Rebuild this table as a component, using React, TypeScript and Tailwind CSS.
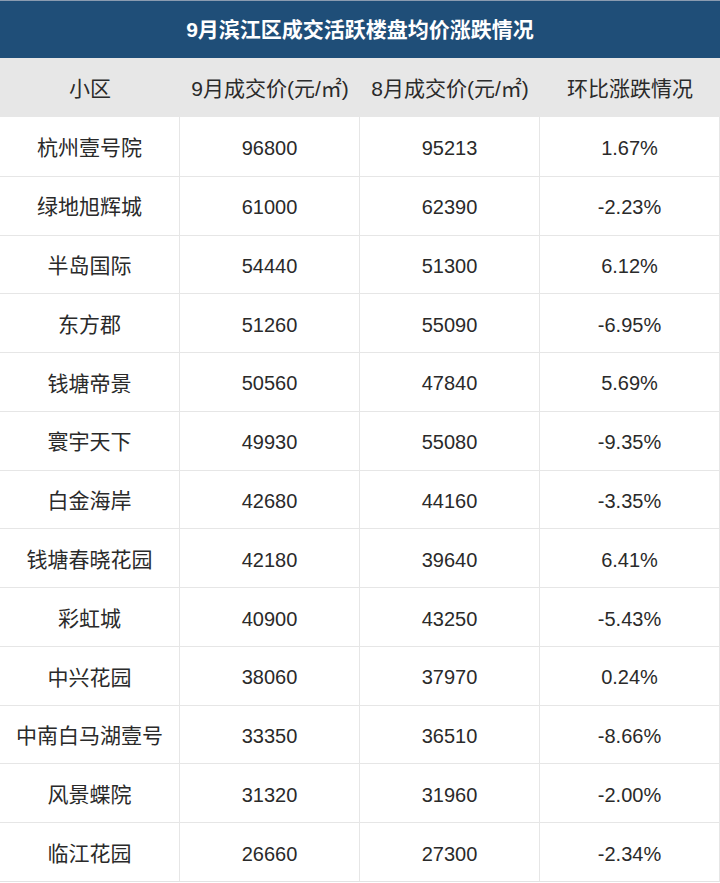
const rows: [string, string, string, string][] = [
  ["杭州壹号院", "96800", "95213", "1.67%"],
  ["绿地旭辉城", "61000", "62390", "-2.23%"],
  ["半岛国际", "54440", "51300", "6.12%"],
  ["东方郡", "51260", "55090", "-6.95%"],
  ["钱塘帝景", "50560", "47840", "5.69%"],
  ["寰宇天下", "49930", "55080", "-9.35%"],
  ["白金海岸", "42680", "44160", "-3.35%"],
  ["钱塘春晓花园", "42180", "39640", "6.41%"],
  ["彩虹城", "40900", "43250", "-5.43%"],
  ["中兴花园", "38060", "37970", "0.24%"],
  ["中南白马湖壹号", "33350", "36510", "-8.66%"],
  ["风景蝶院", "31320", "31960", "-2.00%"],
  ["临江花园", "26660", "27300", "-2.34%"],
];

const headers = ["小区", "9月成交价(元/㎡)", "8月成交价(元/㎡)", "环比涨跌情况"];

export default function App() {
  return (
    <div
      className="w-[720px] h-[883px] bg-white text-[#2a2a2a]"
      style={{ fontFamily: '"Liberation Sans", "Noto Sans CJK SC", sans-serif' }}
    >
      <div className="h-[58px] bg-[#1f4e78] border-t border-[#8a9bb0] flex items-center justify-center text-white font-bold text-[21px]">
        9月滨江区成交活跃楼盘均价涨跌情况
      </div>
      <div className="h-[59px] bg-[#e7e7e7] grid grid-cols-4 text-[21px]">
        {headers.map((h) => (
          <div key={h} className="flex items-center justify-center pt-[2px]">
            {h}
          </div>
        ))}
      </div>
      <div className="border-b border-[#e3e3e3]">
        {rows.map((r) => (
          <div key={r[0]} className="h-[58.77px] grid grid-cols-4 border-t border-[#e6e6e6] first:border-t-0">
            {r.map((c, i) => (
              <div
                key={i}
                className={`flex items-center justify-center border-r border-[#e6e6e6] pt-[3px] ${
                  i === 0 ? "text-[21px]" : "text-[20px]"
                }`}
              >
                {c}
              </div>
            ))}
          </div>
        ))}
      </div>
    </div>
  );
}
